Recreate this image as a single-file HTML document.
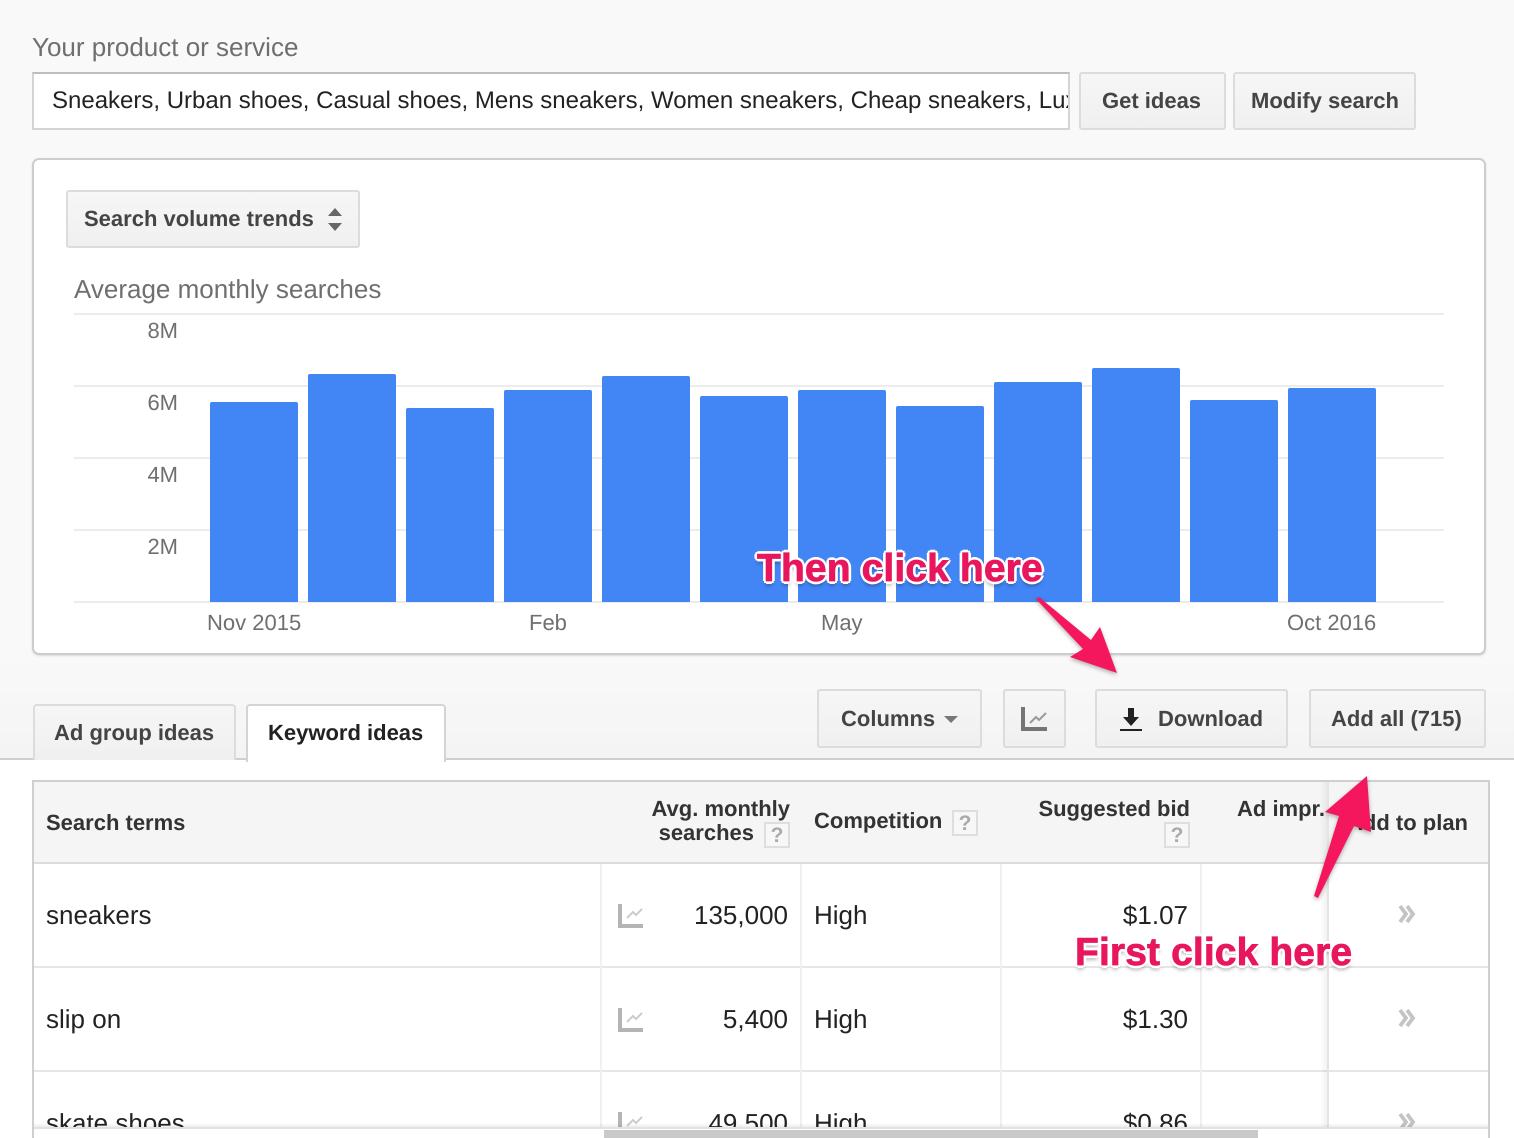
<!DOCTYPE html>
<html lang="en"><head><meta charset="utf-8"><title>Keyword Planner</title>
<style>
*{box-sizing:border-box}
html,body{margin:0;padding:0}
body{width:1514px;height:1138px;position:relative;overflow:hidden;background:#fff;font-family:"Liberation Sans",Arial,sans-serif;text-rendering:geometricPrecision}
.a{position:absolute;white-space:nowrap}
.t{position:absolute;white-space:nowrap;line-height:30px;height:30px}
.top{position:absolute;left:0;top:0;width:1514px;background:linear-gradient(#f9f9f9 0,#f9f9f9 660px,#f4f4f4 759px);border-bottom:2px solid #cfcfcf;height:760px}
.btn{position:absolute;background:linear-gradient(#f6f6f6,#f0f0f0);border:2px solid #dcdcdc;border-radius:3px}
.bl{font-weight:700;color:#444;font-size:22px;margin-top:1px}
.lab{color:#6f6f6f}
.grid{position:absolute;left:74px;width:1370px;height:2px;background:#ececec}
.bar{position:absolute;width:88px;background:#4285f4;border-radius:2px 2px 0 0}
.y{position:absolute;right:1336px;color:#6f6f6f;font-size:22px;line-height:30px;white-space:nowrap;margin-top:1px}
.x{position:absolute;color:#6f6f6f;font-size:22px;line-height:30px;white-space:nowrap;margin-top:1px}
.h{font-weight:700;color:#333;font-size:22px;margin-top:1px}
.r{color:#222;font-size:26px}
.q{position:absolute;width:26px;height:26px;border:2px solid #dedede;background:#f7f7f7;color:#aaa;font-weight:700;font-size:21px;line-height:23px;text-align:center}
.hl{position:absolute;left:34px;width:1454px;height:2px;background:#e6e6e6}
.vl{position:absolute;top:864px;width:2px;height:264px;background:#f0f0f0}
.call{position:absolute;white-space:nowrap;font-weight:700;font-size:39px;letter-spacing:.12px;line-height:44px;color:#e8175d;-webkit-text-stroke:.8px #e8175d;text-shadow:2px 0 0 #fff,-2px 0 0 #fff,0 2px 0 #fff,0 -2px 0 #fff,2px 2px 0 #fff,-2px 2px 0 #fff,2px -2px 0 #fff,-2px -2px 0 #fff,3px 0 0 #fff,-3px 0 0 #fff,0 3px 0 #fff,0 -3px 0 #fff,0 4px 4px rgba(0,0,0,.4)}
</style></head><body>

<div class="top"></div>

<div class="t lab" style="left:32px;top:32px;font-size:26px">Your product or service</div>
<div class="a" style="left:32px;top:72px;width:1038px;height:58px;background:#fff;border:2px solid #d4d4d4;border-top-color:#bdbdbd;overflow:hidden">
  <div class="t" style="left:18px;top:12px;font-size:24px;color:#222">Sneakers, Urban shoes, Casual shoes, Mens sneakers, Women sneakers, Cheap sneakers, Luxury sneakers</div>
</div>
<div class="btn" style="left:1079px;top:72px;width:147px;height:58px"></div>
<div class="t bl" style="left:1102px;top:85px">Get ideas</div>
<div class="btn" style="left:1233px;top:72px;width:183px;height:58px"></div>
<div class="t bl" style="left:1251px;top:85px">Modify search</div>

<div class="a" style="left:32px;top:158px;width:1454px;height:497px;background:#fff;border:2px solid #cdcdcd;border-radius:7px;box-shadow:0 1px 2px rgba(0,0,0,.12)"></div>

<div class="btn" style="left:66px;top:190px;width:294px;height:58px"></div>
<div class="t bl" style="left:84px;top:203px">Search volume trends</div>
<svg class="a" style="left:326px;top:206px" width="18" height="26" viewBox="0 0 18 26"><path d="M2 10 9 2l7 8zM2 17h14l-7 8z" fill="#666"/></svg>

<div class="t lab" style="left:74px;top:274px;font-size:26px">Average monthly searches</div>

<div class="grid" style="top:313px"></div>
<div class="grid" style="top:385px"></div>
<div class="grid" style="top:457px"></div>
<div class="grid" style="top:529px"></div>
<div class="grid" style="top:601px"></div>
<div class="y" style="top:315px">8M</div>
<div class="y" style="top:387px">6M</div>
<div class="y" style="top:459px">4M</div>
<div class="y" style="top:531px">2M</div>

<div class="bar" style="left:210px;top:402px;height:200px"></div>
<div class="bar" style="left:308px;top:374px;height:228px"></div>
<div class="bar" style="left:406px;top:408px;height:194px"></div>
<div class="bar" style="left:504px;top:390px;height:212px"></div>
<div class="bar" style="left:602px;top:376px;height:226px"></div>
<div class="bar" style="left:700px;top:396px;height:206px"></div>
<div class="bar" style="left:798px;top:390px;height:212px"></div>
<div class="bar" style="left:896px;top:406px;height:196px"></div>
<div class="bar" style="left:994px;top:382px;height:220px"></div>
<div class="bar" style="left:1092px;top:368px;height:234px"></div>
<div class="bar" style="left:1190px;top:400px;height:202px"></div>
<div class="bar" style="left:1288px;top:388px;height:214px"></div>

<div class="x" style="left:207px;top:607px">Nov 2015</div>
<div class="x" style="left:529px;top:607px">Feb</div>
<div class="x" style="left:821px;top:607px">May</div>
<div class="x" style="left:1287px;top:607px">Oct 2016</div>

<div class="btn" style="left:817px;top:689px;width:165px;height:59px"></div>
<div class="t bl" style="left:841px;top:703px">Columns</div>
<svg class="a" style="left:943px;top:715px" width="16" height="9" viewBox="0 0 16 9"><path d="M1 1h14L8 8z" fill="#777"/></svg>
<div class="btn" style="left:1003px;top:689px;width:63px;height:59px"></div>
<svg class="a" style="left:1021px;top:706px" width="28" height="26" viewBox="0 0 28 26"><path d="M2 1v22h24" fill="none" stroke="#757575" stroke-width="4"/><path d="M9 17l6-6 3 3 7-7" fill="none" stroke="#999" stroke-width="2"/></svg>
<div class="btn" style="left:1095px;top:689px;width:193px;height:59px"></div>
<svg class="a" style="left:1119px;top:707px" width="24" height="25" viewBox="0 0 24 25"><path d="M9 1h6v9h5l-8 9-8-9h5z" fill="#222"/><rect x="1" y="22" width="22" height="2" fill="#222"/></svg>
<div class="t bl" style="left:1158px;top:703px">Download</div>
<div class="btn" style="left:1309px;top:689px;width:177px;height:59px"></div>
<div class="t bl" style="left:1331px;top:703px">Add all (715)</div>

<div class="a" style="left:33px;top:704px;width:203px;height:56px;background:linear-gradient(#f6f6f6,#f0f0f0);border:2px solid #dcdcdc;border-bottom:0;border-radius:4px 4px 0 0"></div>
<div class="t bl" style="left:54px;top:717px">Ad group ideas</div>
<div class="a" style="left:246px;top:704px;width:200px;height:58px;background:#fff;border:2px solid #d4d4d4;border-bottom:0;border-radius:4px 4px 0 0"></div>
<div class="t bl" style="left:268px;top:717px;color:#222">Keyword ideas</div>

<!-- table -->
<div class="a" style="left:32px;top:780px;width:1458px;height:358px;border:2px solid #cfcfcf;border-bottom:0;background:#fff"></div>
<div class="a" style="left:34px;top:782px;width:1454px;height:80px;background:#f5f5f5"></div>
<div class="a" style="left:34px;top:862px;width:1454px;height:2px;background:#dcdcdc"></div>

<div class="t h" style="left:46px;top:807px">Search terms</div>
<div class="t h" style="right:724px;top:793px">Avg. monthly</div>
<div class="t h" style="right:760px;top:817px">searches</div>
<div class="q" style="left:764px;top:822px">?</div>
<div class="t h" style="left:814px;top:805px">Competition</div>
<div class="q" style="left:952px;top:810px">?</div>
<div class="t h" style="right:324px;top:793px">Suggested bid</div>
<div class="q" style="left:1164px;top:822px">?</div>
<div class="t h" style="left:1237px;top:793px">Ad impr.</div>
<div class="t h" style="right:46px;top:807px">Add to plan</div>

<div class="a" style="left:34px;top:864px;width:1454px;height:263px;overflow:hidden">
  <div class="t r" style="left:12px;top:36px">sneakers</div>
  <div class="t r" style="left:12px;top:140px">slip on</div>
  <div class="t r" style="left:12px;top:244px">skate shoes</div>
  <div class="t r" style="right:700px;top:36px">135,000</div>
  <div class="t r" style="right:700px;top:140px">5,400</div>
  <div class="t r" style="right:700px;top:244px">49,500</div>
  <div class="t r" style="left:780px;top:36px">High</div>
  <div class="t r" style="left:780px;top:140px">High</div>
  <div class="t r" style="left:780px;top:244px">High</div>
  <div class="t r" style="right:300px;top:36px">$1.07</div>
  <div class="t r" style="right:300px;top:140px">$1.30</div>
  <div class="t r" style="right:300px;top:244px">$0.86</div>
  <svg class="a" style="left:583px;top:39px" width="26" height="26" viewBox="0 0 26 26"><path d="M3 1v22h23" fill="none" stroke="#b4b4b4" stroke-width="4"/><path d="M10 15l6-6 3 3 6-6" fill="none" stroke="#ccc" stroke-width="2"/></svg>
  <svg class="a" style="left:583px;top:143px" width="26" height="26" viewBox="0 0 26 26"><path d="M3 1v22h23" fill="none" stroke="#b4b4b4" stroke-width="4"/><path d="M10 15l6-6 3 3 6-6" fill="none" stroke="#ccc" stroke-width="2"/></svg>
  <svg class="a" style="left:583px;top:247px" width="26" height="26" viewBox="0 0 26 26"><path d="M3 1v22h23" fill="none" stroke="#b4b4b4" stroke-width="4"/><path d="M10 15l6-6 3 3 6-6" fill="none" stroke="#ccc" stroke-width="2"/></svg>
  <svg class="a" style="left:1363px;top:40px" width="20" height="20" viewBox="0 0 20 20"><path d="M3 2l6 8-6 8M10 2l6 8-6 8" fill="none" stroke="#c4c4c4" stroke-width="3.8"/></svg>
  <svg class="a" style="left:1363px;top:144px" width="20" height="20" viewBox="0 0 20 20"><path d="M3 2l6 8-6 8M10 2l6 8-6 8" fill="none" stroke="#c4c4c4" stroke-width="3.8"/></svg>
  <svg class="a" style="left:1363px;top:248px" width="20" height="20" viewBox="0 0 20 20"><path d="M3 2l6 8-6 8M10 2l6 8-6 8" fill="none" stroke="#c4c4c4" stroke-width="3.8"/></svg>
</div>

<div class="hl" style="top:966px"></div>
<div class="hl" style="top:1070px"></div>
<div class="vl" style="left:600px"></div>
<div class="vl" style="left:800px"></div>
<div class="vl" style="left:1000px"></div>
<div class="vl" style="left:1200px"></div>

<!-- frozen column edge -->
<div class="a" style="left:1320px;top:782px;width:7px;height:345px;background:linear-gradient(90deg,rgba(0,0,0,0),rgba(0,0,0,.05))"></div>
<div class="a" style="left:1327px;top:782px;width:2px;height:345px;background:#e4e4e4"></div>

<!-- horizontal scroll shadow and thumb -->
<div class="a" style="left:34px;top:1123px;width:1454px;height:4px;background:linear-gradient(rgba(0,0,0,0),rgba(0,0,0,.07))"></div>
<div class="a" style="left:34px;top:1127px;width:1454px;height:2px;background:#e2e2e2"></div>
<div class="a" style="left:34px;top:1129px;width:1454px;height:9px;background:#fff"></div>
<div class="a" style="left:604px;top:1130px;width:654px;height:8px;background:#c9c9c9"></div>

<!-- annotations -->
<svg class="a" style="left:0;top:0;filter:drop-shadow(0 2px 2px rgba(0,0,0,.3))" width="1514" height="1138" viewBox="0 0 1514 1138">
  <path d="M1036 599 1039 597 1091 640 1100 627 1117 673 1070 657 1083 649Z" fill="#f5175e"/>
  <path d="M1367 776 1371 832 1354 826 1318 898 1314 896 1339 816 1325 812Z" fill="#f5175e"/>
</svg>
<div class="call" style="left:757px;top:547px">Then click here</div>
<div class="call" style="left:1075px;top:931px">First click here</div>

</body></html>
